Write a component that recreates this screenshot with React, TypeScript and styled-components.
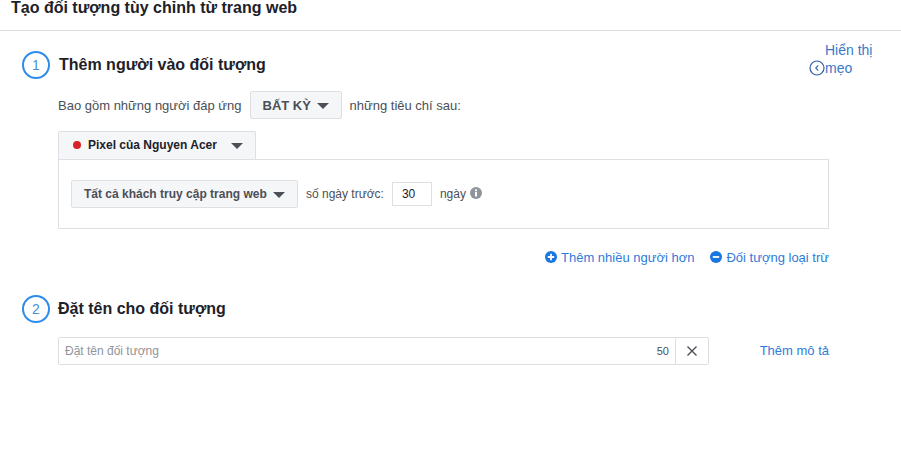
import styled, { createGlobalStyle } from "styled-components"

const Global = createGlobalStyle`
    html, body {
        margin: 0;
        padding: 0;
        background: #fff;
        font-family: "Liberation Sans", Arial, sans-serif;
        color: #4b4f56;
    }
`;

const Page = styled.div`
    width: 901px;
    height: 473px;
    overflow: hidden;
`;

const Header = styled.div`
    height: 30px;
    box-sizing: content-box;
    border-bottom: 1px solid #dddfe2;
    padding-left: 11px;
    font-size: 16px;
    font-weight: bold;
    line-height: 15px;
    color: #1d2129;
`;

const Body = styled.div`
    padding: 20px 0 0 22px;
    width: 807px;
`;

const StepHead = styled.div<{ $gap: number }>`
    display: flex;
    align-items: center;
    gap: ${(p) => p.$gap}px;
    height: 28px;
`;

const StepNumber = styled.div`
    width: 28px;
    height: 28px;
    box-sizing: border-box;
    flex: none;
    border: 2px solid #2d8ceb;
    border-radius: 50%;
    display: flex;
    align-items: center;
    justify-content: center;
    font-size: 14px;
    color: #4a90d9;
`;

const StepTitle = styled.div`
    font-size: 16px;
    font-weight: bold;
    color: #1d2129;
`;

const Hint = styled.a`
    display: flex;
    align-items: flex-end;
    margin-left: auto;
    margin-right: -44px;
    margin-top: -12px;
    width: 64px;
    flex: none;
    font-size: 14px;
    line-height: 18px;
    color: #3b78c9;
`;

const HintIcon = styled.svg`
    flex: none;
    width: 16px;
    height: 16px;
    margin-bottom: 1px;
`;

const Indented = styled.div`
    margin-left: 36px;
`;

const MatchRow = styled.div`
    display: flex;
    align-items: center;
    margin-top: 12px;
    height: 28px;
    font-size: 13px;
`;

const Caret = styled.span<{ $left?: number }>`
    display: inline-block;
    flex: none;
    width: 0;
    height: 0;
    border-left: 6px solid transparent;
    border-right: 6px solid transparent;
    border-top: 6px solid #4b4f56;
    margin-top: 2px;
    margin-left: ${(p) => p.$left ?? 0}px;
`;

const Select = styled.div<{ $width: number; $pad: number; $gap: number; $size?: number }>`
    display: flex;
    align-items: center;
    box-sizing: border-box;
    width: ${(p) => p.$width}px;
    height: 28px;
    padding-left: ${(p) => p.$pad}px;
    gap: ${(p) => p.$gap}px;
    flex: none;
    background: #f5f6f7;
    border: 1px solid #dddfe2;
    border-radius: 2px;
    font-size: ${(p) => p.$size ?? 12}px;
    font-weight: bold;
    color: #4b4f56;
`;

const MatchText = styled.span<{ $left?: number; $right?: number }>`
    margin-left: ${(p) => p.$left ?? 0}px;
    margin-right: ${(p) => p.$right ?? 0}px;
`;

const PixelTab = styled(Select)`
    margin-top: 12px;
    border-bottom-color: #f5f6f7;
    border-radius: 2px 2px 0 0;
    color: #1d2129;
`;

const Dot = styled.span`
    width: 8px;
    height: 8px;
    border-radius: 50%;
    flex: none;
    background: #d8232a;
`;

const RuleBox = styled.div`
    box-sizing: border-box;
    height: 70px;
    padding-left: 12px;
    border: 1px solid #dddfe2;
    display: flex;
    align-items: center;
    font-size: 12px;
`;

const DaysInput = styled.div`
    box-sizing: border-box;
    width: 40px;
    height: 24px;
    margin: 0 8px;
    padding-left: 9px;
    line-height: 23px;
    border: 1px solid #dddfe2;
    color: #1d2129;
`;

const InfoIcon = styled.svg`
    width: 12px;
    height: 12px;
    margin-left: 4px;
    margin-top: -3px;
`;

const Links = styled.div`
    display: flex;
    justify-content: flex-end;
    gap: 16px;
    margin-top: 19px;
    height: 18px;
`;

const LinkItem = styled.a`
    display: flex;
    align-items: center;
    gap: 4px;
    font-size: 13px;
    color: #2f7bd9;
`;

const RoundIcon = styled.svg`
    width: 12px;
    height: 12px;
    margin-top: -1px;
`;

const NameSection = styled.div`
    margin-top: 29px;
`;

const NameRow = styled.div`
    display: flex;
    align-items: center;
    margin-top: 14px;
`;

const NameField = styled.div`
    box-sizing: border-box;
    width: 651px;
    height: 28px;
    display: flex;
    align-items: center;
    border: 1px solid #dddfe2;
    border-radius: 2px;
    font-size: 12px;
`;

const Placeholder = styled.span`
    padding-left: 6px;
    color: #90949c;
`;

const Counter = styled.span`
    margin-left: auto;
    margin-right: 6px;
    font-size: 11px;
    color: #4b4f56;
`;

const ClearButton = styled.div`
    box-sizing: border-box;
    width: 33px;
    height: 26px;
    flex: none;
    display: flex;
    align-items: center;
    justify-content: center;
    border-left: 1px solid #dddfe2;
`;

const DescLink = styled.a`
    margin-left: auto;
    margin-top: -2px;
    font-size: 13px;
    color: #2f7bd9;
`;

const App = () => {
    return (
        <Page>
            <Global />
            <Header>Tạo đối tượng tùy chỉnh từ trang web</Header>
            <Body>
                <StepHead $gap={9}>
                    <StepNumber>1</StepNumber>
                    <StepTitle>Thêm người vào đối tượng</StepTitle>
                    <Hint>
                        <HintIcon viewBox="0 0 16 16" fill="none" stroke="#2f5f9e">
                            <circle cx="8" cy="8" r="7" strokeWidth="1.2" />
                            <path d="M9.3 5.4 6.8 8l2.5 2.6" strokeWidth="1.1" />
                        </HintIcon>
                        <div>Hiển thị mẹo</div>
                    </Hint>
                </StepHead>
                <Indented>
                    <MatchRow>
                        <MatchText $right={8}>Bao gồm những người đáp ứng</MatchText>
                        <Select $width={92} $pad={12} $gap={6} $size={13}>
                            BẤT KỲ <Caret />
                        </Select>
                        <MatchText $left={8}>những tiêu chí sau:</MatchText>
                    </MatchRow>
                    <PixelTab $width={198} $pad={14} $gap={7}>
                        <Dot />
                        Pixel của Nguyen Acer
                        <Caret $left={7} />
                    </PixelTab>
                    <RuleBox>
                        <Select $width={227} $pad={12} $gap={6}>
                            Tất cả khách truy cập trang web <Caret />
                        </Select>
                        <MatchText $left={8}>số ngày trước:</MatchText>
                        <DaysInput>30</DaysInput>
                        <span>ngày</span>
                        <InfoIcon viewBox="0 0 12 12">
                            <circle cx="6" cy="6" r="6" fill="#90949c" />
                            <rect x="5" y="5" width="2" height="4.500" fill="#fff" />
                            <rect x="5" y="2.400" width="2" height="1.800" fill="#fff" />
                        </InfoIcon>
                    </RuleBox>
                    <Links>
                        <LinkItem>
                            <RoundIcon viewBox="0 0 12 12">
                                <circle cx="6" cy="6" r="6" fill="#1877e0" />
                                <path d="M6 2.8v6.4M2.8 6h6.4" stroke="#fff" strokeWidth="1.8" />
                            </RoundIcon>
                            Thêm nhiều người hơn
                        </LinkItem>
                        <LinkItem>
                            <RoundIcon viewBox="0 0 12 12">
                                <circle cx="6" cy="6" r="6" fill="#1877e0" />
                                <path d="M2.8 6h6.4" stroke="#fff" strokeWidth="1.8" />
                            </RoundIcon>
                            Đối tượng loại trừ
                        </LinkItem>
                    </Links>
                </Indented>
                <NameSection>
                    <StepHead $gap={8}>
                        <StepNumber>2</StepNumber>
                        <StepTitle>Đặt tên cho đối tượng</StepTitle>
                    </StepHead>
                    <Indented>
                        <NameRow>
                            <NameField>
                                <Placeholder>Đặt tên đối tượng</Placeholder>
                                <Counter>50</Counter>
                                <ClearButton>
                                    <svg width="10" height="10" viewBox="0 0 10 10" stroke="#4b4f56" strokeWidth="1.4">
                                        <path d="M.5.5l9 9M9.5.5l-9 9" />
                                    </svg>
                                </ClearButton>
                            </NameField>
                            <DescLink>Thêm mô tả</DescLink>
                        </NameRow>
                    </Indented>
                </NameSection>
            </Body>
        </Page>
    )
}

export default App;
